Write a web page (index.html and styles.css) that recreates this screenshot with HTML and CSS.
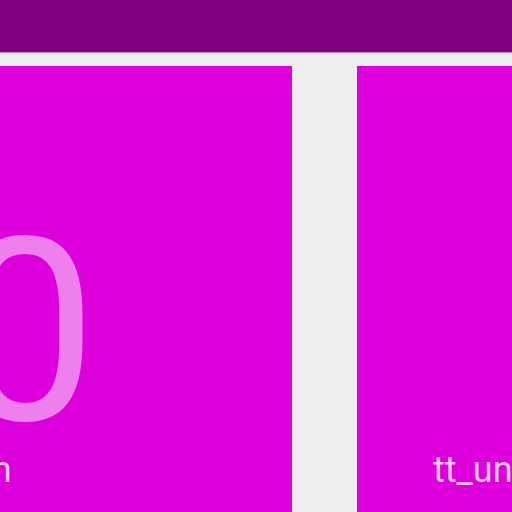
FILE: index.html
```html
<!DOCTYPE html>
<html>
<head>
<meta charset="utf-8">
<link rel="stylesheet" href="styles.css">
</head>
<body>
<div class="appbar"></div>
<div class="row">
  <div class="card">
    <div class="value value-left">0</div>
    <div class="label label-left">tt_un</div>
  </div>
  <div class="card">
    <div class="value value-right"></div>
    <div class="label label-right">tt_un</div>
  </div>
</div>
</body>
</html>
```
FILE: styles.css
```css
html, body {
  margin: 0;
  padding: 0;
  width: 512px;
  height: 512px;
  overflow: hidden;
  background: #eeeeee;
  font-family: Roboto, "Noto Sans", sans-serif;
}
.appbar {
  height: 52px;
  background: #800080;
  border-bottom: 1px solid #c88ac8;
}
.row {
  display: flex;
  gap: 65px;
  margin-top: 13px;
  margin-left: -200px;
}
.card {
  flex: 0 0 492px;
  height: 460px;
  background: #dd00dd;
  display: flex;
  flex-direction: column;
  overflow: hidden;
}
.value {
  height: 243px;
  margin-top: 139px;
  font-size: 256px;
  line-height: 256px;
  color: rgba(255, 255, 255, 0.5);
  white-space: nowrap;
}
.value-left {
  padding-left: 153px;
}
.label {
  font-size: 36px;
  line-height: 44px;
  color: rgba(255, 255, 255, 0.78);
  white-space: nowrap;
}
.label-left {
  padding-left: 132px;
}
.label-right {
  padding-left: 76px;
}
```
